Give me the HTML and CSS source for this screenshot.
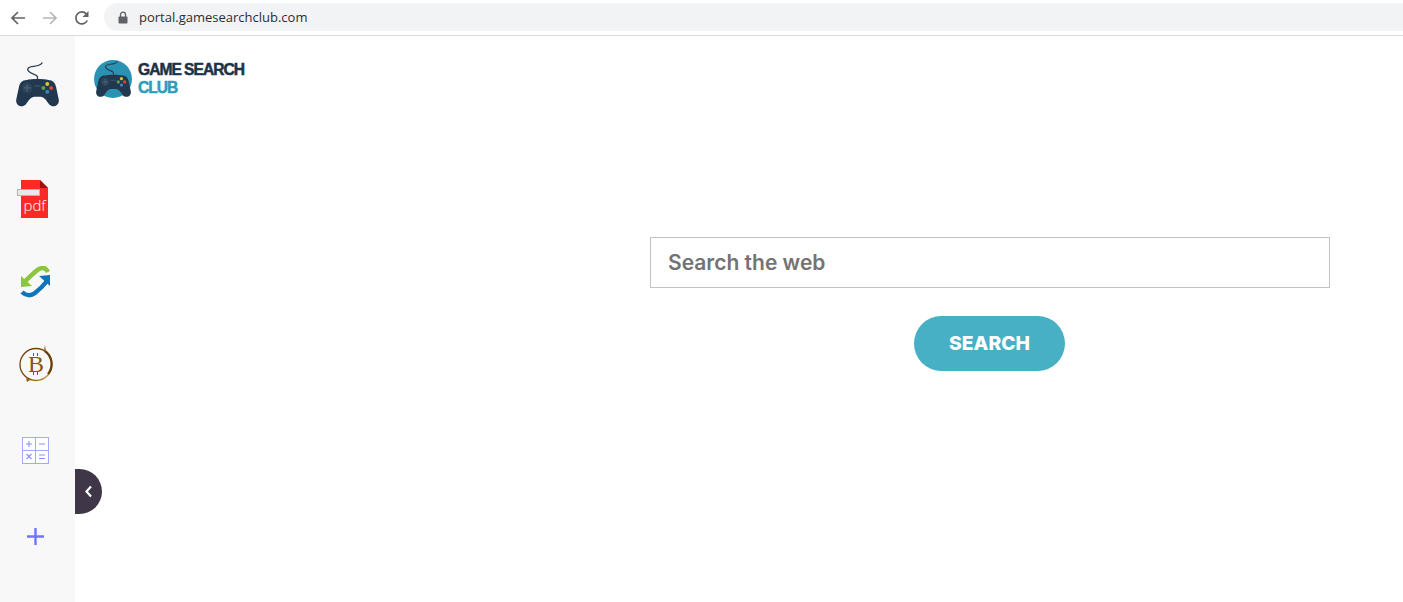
FILE: index.html
```html
<!DOCTYPE html>
<html>
<head>
    <title>Game Search Club</title>
    <link rel="stylesheet" href="styles.css">
</head>
<body>
    <svg class="defs_c" width="0" height="0">
        <symbol id="pad" viewBox="0 0 44 46">
            <path d="M22 19 V15 C22 11 12 12 12 7 C12 2 24 6 27 0" fill="none" stroke="#2b3f55" stroke-width="1.400"/>
            <path d="M11 18 C15 16.500 29 16.500 33 18 C38 18 40 21 41 25 L43.800 38 C44.500 44 38 47 34 43 C31 39 29 35 25 35 H19 C15 35 13 39 10 43 C6 47 -.5 44 .2 38 L3 25 C4 21 6 18 11 18 Z" fill="#22384f"/>
            <circle cx="11.500" cy="26" r="5.500" fill="#2d4359"/>
            <path d="M8 26 H15 M11.500 22.500 V29.500" stroke="#425a72" stroke-width="1.800"/>
            <path d="M19 24 H25" stroke="#3c536b" stroke-width="1.400"/>
            <circle cx="32" cy="22" r="2" fill="#e8c030"/>
            <circle cx="36" cy="26" r="2" fill="#d8483a"/>
            <circle cx="28" cy="26" r="2" fill="#58a848"/>
            <circle cx="32" cy="30" r="2" fill="#3a88c8"/>
        </symbol>
    </svg>

    <div class="toolbar">
        <svg class="nav_icon" viewBox="0 0 16 16"><path d="M15 8 H2 M8 2 L2 8 L8 14" fill="none" stroke="#5f6368" stroke-width="1.700"/></svg>
        <svg class="nav_icon" viewBox="0 0 16 16"><path d="M1 8 H14 M8 2 L14 8 L8 14" fill="none" stroke="#b4b6b9" stroke-width="1.700"/></svg>
        <svg class="nav_icon" viewBox="0 0 16 16"><path d="M13.300 10.500 A6 6 0 1 1 12.300 3.800" fill="none" stroke="#5f6368" stroke-width="1.700"/><path d="M14.500 1 V7 H8.500 Z" fill="#5f6368"/></svg>
        <div class="omnibox">
            <svg class="lock" viewBox="0 0 10 13"><path d="M2.500 6 V3.700 A2.500 2.500 0 0 1 7.500 3.700 V6" fill="none" stroke="#5f6368" stroke-width="1.300"/><rect x="0.500" y="5.500" width="9" height="7" rx="1" fill="#5f6368"/></svg>
            <span class="url">portal.gamesearchclub.com</span>
        </div>
    </div>

    <div class="page">
        <div class="sidebar">
            <svg class="sb_pad"><use href="#pad"/></svg>

            <svg class="sb_pdf" viewBox="0 0 32 38">
                <path d="M4 0 H23 L31 8 V38 H4 Z" fill="#fb2a26"/>
                <path d="M23 0 L31 8 H23 Z" fill="#9c1210"/>
                <rect x="0.500" y="9.500" width="22" height="6" fill="#e8e8ea" stroke="#dda0a6"/>
                <text x="6.500" y="31" class="pdf_txt">pdf</text>
            </svg>

            <svg class="sb_sync" viewBox="0 0 32 32">
                <path d="M3 17 C8 13 14 6 19 3 C23 1 26 2 28 6" fill="none" stroke="#8cc63f" stroke-width="4.500"/>
                <path d="M1 10 L1 21 L12 20 Z" fill="#8cc63f"/>
                <path d="M2 26 C6 30 11 30 15 27 C20 23 24 19 27 15" fill="none" stroke="#0f75bc" stroke-width="4.500"/>
                <path d="M19 10 L30 9 L30 20 Z" fill="#0f75bc"/>
            </svg>

            <svg class="sb_btc" viewBox="0 0 36 38">
                <defs><linearGradient id="ring" x1="0" y1="0" x2="1" y2="1"><stop offset="0" stop-color="#6e3d08"/><stop offset=".6" stop-color="#7a4506"/><stop offset="1" stop-color="#e0b84a"/></linearGradient></defs>
                <circle cx="18" cy="19.500" r="16" fill="none" stroke="url(#ring)" stroke-width="1.300"/>
                <path d="M27 6 A16 16 0 0 1 30 29" fill="none" stroke="#6e3d08" stroke-width="2.200"/>
                <path d="M26 6 L27 0 L28 7 Z M8 33 L9 37 L12 35 Z" fill="#8a5510"/>
                <text x="18" y="27" class="btc_txt">B</text>
                <path d="M15.500 8 V11 M19.500 8 V11 M15.500 27 V30 M19.500 27 V30" stroke="#8a5510"/>
            </svg>

            <svg class="sb_calc" viewBox="0 0 27 27">
                <rect x="0.500" y="0.500" width="26" height="26" fill="#fff" stroke="#a3a9fb"/>
                <path d="M13.500 0 V27 M0 13.500 H27" stroke="#a3a9fb"/>
                <path d="M4 7 H10 M7 4 V10 M17 7 H23 M4.500 17 L9.500 22 M9.500 17 L4.500 22 M17 18 H23 M17 21.500 H23" stroke="#8a90f8" stroke-width="1.100"/>
            </svg>

            <svg class="sb_plus" viewBox="0 0 17 17"><path d="M8.500 0 V17 M0 8.500 H17" stroke="#6f75ff" stroke-width="2.400"/></svg>

            <div class="handle">
                <svg width="9" height="13" viewBox="0 0 9 13"><path d="M7 1.500 L2.500 6.500 L7 11.500" fill="none" stroke="#fff" stroke-width="2.200"/></svg>
            </div>
        </div>

        <div class="content">
            <div class="logo">
                <div class="logo_mark"><svg class="logo_pad"><use href="#pad"/></svg></div>
                <div class="logo_txt">
                    <div class="logo_l1">GAME SEARCH</div>
                    <div class="logo_l2">CLUB</div>
                </div>
            </div>

            <form class="search_c">
                <div class="search_box">Search the web</div>
                <button type="button" class="search_btn">SEARCH</button>
            </form>
        </div>
    </div>
</body>
</html>
```
FILE: styles.css
```css
html, body { margin: 0; height: 100%; overflow: hidden; }
body { background: #fff; font-family: "Open Sans", sans-serif; display: flex; flex-direction: column; }
svg { display: block; }
.defs_c { position: absolute; }

.toolbar { height: 35px; flex: none; display: flex; align-items: center; border-bottom: 1px solid #dadbdc; padding-left: 10px; }
.nav_icon { width: 16px; height: 16px; margin-right: 16px; }
.omnibox { flex: 1; height: 28px; margin-left: -2px; margin-top: -1px; background: #f1f3f4; border-radius: 14px 0 0 14px; display: flex; align-items: center; padding-left: 14px; }
.lock { width: 10px; height: 13px; margin-right: 11px; }
.url { font-family: "Open Sans", Arial, sans-serif; font-size: 13px; color: #2b2f33; }

.page { flex: 1; display: flex; }

.sidebar { position: relative; width: 75px; flex: none; background: #f8f8f8; display: flex; flex-direction: column; }
.sb_pad { width: 43px; height: 46px; margin: 26px 0 0 16px; }
.sb_pdf { width: 32px; height: 38px; margin: 72px 0 0 17px; }
.sb_sync { width: 32px; height: 32px; margin: 48px 0 0 20px; }
.sb_btc { width: 36px; height: 38px; margin: 47px 0 0 18px; }
.sb_calc { width: 27px; height: 27px; margin: 54px 0 0 22px; }
.sb_plus { width: 17px; height: 17px; margin: 64px 0 0 27px; }
.pdf_txt { font-family: "Open Sans", sans-serif; font-weight: 300; font-size: 15px; fill: #fff; }
.btc_txt { font-family: "Liberation Serif", serif; font-size: 24px; fill: #8a5510; text-anchor: middle; }
.handle { position: absolute; left: 75px; top: 433px; width: 27px; height: 45px; background: #3f3747; border-radius: 0 23px 23px 0; display: flex; align-items: center; justify-content: center; }

.content { flex: 1; display: flex; flex-direction: column; }
.logo { display: flex; margin: 23px 0 0 19px; }
.logo_mark { width: 38px; height: 38px; border-radius: 50%; background: #2a93b3; margin-top: 1px; display: flex; align-items: flex-end; justify-content: center; }
.logo_pad { width: 35px; height: 37px; }
.logo_txt { margin: 2px 0 0 6px; font-family: "Liberation Sans", sans-serif; font-weight: bold; font-size: 15.600px; line-height: 18px; letter-spacing: -1px; white-space: nowrap; -webkit-text-stroke: .5px; }
.logo_l1 { color: #1b3347; }
.logo_l2 { color: #2f9cbc; }

.search_c { width: 680px; margin: 139px 0 0 575px; display: flex; flex-direction: column; align-items: center; }
.search_box { box-sizing: border-box; width: 100%; height: 51px; border: 1px solid #c2c2c2; padding: 0 0 1px 17px; display: flex; align-items: center; font-family: Inter, sans-serif; font-weight: 600; font-size: 21px; color: #737373; }
.search_btn { width: 151px; height: 55px; margin: 28px 1px 0 0; border: 0; border-radius: 28px; background: #47b0c4; color: #fff; font-family: Inter, sans-serif; font-weight: 800; font-size: 19.300px; padding: 0 0 2px; }
```
